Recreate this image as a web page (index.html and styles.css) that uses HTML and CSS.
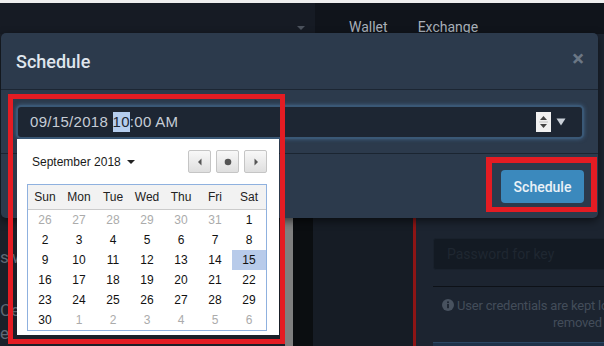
FILE: index.html
```html
<!DOCTYPE html>
<html lang="en">
<head>
<meta charset="utf-8">
<title>Schedule</title>
<link rel="stylesheet" href="styles.css">
</head>
<body>
<div class="topstrip"></div>
<header class="nav">
  <div class="nav-left"><span class="nav-caret"></span></div>
  <nav class="nav-right">
    <a class="nav-link">Wallet</a>
    <a class="nav-link">Exchange</a>
  </nav>
</header>
<main class="main">
  <section class="col-left">
    <p class="frag frag-1">s,w</p>
    <p class="frag frag-2">Cer</p>
    <p class="frag frag-3">e</p>
  </section>
  <div class="col-gray"></div>
  <div class="col-black"></div>
  <div class="col-mid"></div>
  <div class="col-redline"></div>
  <section class="col-right">
    <div class="pw-input">Password for key</div>
    <div class="divider"></div>
    <p class="info">
      <span class="info-l1"><svg class="info-icon" viewBox="0 0 12 12" width="12" height="12"><circle cx="6" cy="6" r="6" fill="#48525f"/><rect x="5.1" y="5" width="1.8" height="4.2" fill="#1c2430"/><circle cx="6" cy="3.3" r="1" fill="#1c2430"/></svg> User credentials are kept locally</span>
      <span class="info-l2">removed</span>
    </p>
    <div class="bluebar"></div>
  </section>
</main>

<div class="modal">
  <div class="modal-header">
    <h2 class="modal-title">Schedule</h2>
    <span class="modal-close">×</span>
  </div>
  <div class="modal-body">
    <div class="dt-input">
      <span class="dt-text">09/15/2018 <span class="dt-sel">10</span>:00 AM</span>
      <span class="dt-spin">
        <svg viewBox="0 0 15 20" width="15" height="20"><path d="M4 8 L7.5 4 L11 8 Z" fill="#444"/><path d="M4 12 L7.5 16 L11 12 Z" fill="#444"/><rect x="3" y="9.6" width="9" height="0.8" fill="#bbb"/></svg>
      </span>
      <span class="dt-drop">
        <svg viewBox="0 0 10 8" width="10" height="8"><path d="M0.5 0.5 L9.5 0.5 L5 7.5 Z" fill="#c9d0d8"/></svg>
      </span>
      <div class="cal">
        <div class="cal-top">
          <span class="cal-month">September 2018 <svg class="cal-caret" viewBox="0 0 8 4" width="8" height="4"><path d="M0 0 L8 0 L4 4 Z" fill="#222"/></svg></span>
          <div class="cal-navs">
            <span class="cal-btn"><svg viewBox="0 0 6 8" width="6" height="8"><path d="M4.5 0.5 L4.5 7.5 L1 4 Z" fill="#555"/></svg></span>
            <span class="cal-btn"><svg viewBox="0 0 8 8" width="8" height="8"><circle cx="4" cy="4" r="3.3" fill="#555"/></svg></span>
            <span class="cal-btn"><svg viewBox="0 0 6 8" width="6" height="8"><path d="M1.5 0.5 L1.5 7.5 L5 4 Z" fill="#555"/></svg></span>
          </div>
        </div>
        <div class="cal-grid">
          <div class="cal-head">
            <span>Sun</span><span>Mon</span><span>Tue</span><span>Wed</span><span>Thu</span><span>Fri</span><span>Sat</span>
          </div>
          <div class="cal-days">
            <span class="off">26</span><span class="off">27</span><span class="off">28</span><span class="off">29</span><span class="off">30</span><span class="off">31</span><span>1</span>
            <span>2</span><span>3</span><span>4</span><span>5</span><span>6</span><span>7</span><span>8</span>
            <span>9</span><span>10</span><span>11</span><span>12</span><span>13</span><span>14</span><span class="sel">15</span>
            <span>16</span><span>17</span><span>18</span><span>19</span><span>20</span><span>21</span><span>22</span>
            <span>23</span><span>24</span><span>25</span><span>26</span><span>27</span><span>28</span><span>29</span>
            <span>30</span><span class="off">1</span><span class="off">2</span><span class="off">3</span><span class="off">4</span><span class="off">5</span><span class="off">6</span>
          </div>
        </div>
      </div>
    </div>
  </div>
  <div class="modal-footer">
    <button class="btn-primary">Schedule</button>
  </div>
</div>

<div class="mark mark-picker"></div>
<div class="mark mark-button"></div>
</body>
</html>
```

FILE: styles.css
```css
* { box-sizing: border-box; }
html, body { margin: 0; padding: 0; }
body {
  width: 604px;
  height: 346px;
  overflow: hidden;
  background: #11151c;
  font-family: Roboto, "Liberation Sans", sans-serif;
  position: relative;
}
p, h2 { margin: 0; }

.topstrip { height: 3px; background: #eeeeee; }

.nav { height: 31px; display: flex; }
.nav-left {
  width: 315px;
  background: #161b24;
  display: flex;
  justify-content: flex-end;
  align-items: flex-start;
  padding: 23px 10px 0 0;
}
.nav-caret {
  width: 0; height: 0;
  border-left: 4px solid transparent;
  border-right: 4px solid transparent;
  border-top: 4px solid #4b525c;
}
.nav-right {
  flex: 1;
  background: #10141b;
  display: flex;
  gap: 30px;
  padding: 15px 0 0 34px;
}
.nav-link { font-size: 14px; line-height: 18px; color: #a9b0b9; }

.main { display: flex; height: 312px; }
.col-left {
  width: 285px;
  background: #1a2029;
  padding-top: 212px;
  overflow: hidden;
}
.frag { font-size: 17px; color: #5f6874; line-height: 22px; }
.frag-2 { margin-top: 31px; }
.frag-3 { margin-top: 1px; }
.col-gray { width: 8px; background: #7f7f7f; }
.col-black { width: 20px; background: #0b0e11; }
.col-mid { width: 100px; background: #161c25; }
.col-redline { width: 3px; background: #8d1515; }
.col-right {
  flex: 1;
  background: #1c2430;
  padding: 204px 0 0 17px;
  overflow: hidden;
}
.pw-input {
  width: 300px;
  height: 32px;
  background: #131a23;
  border: 1px solid #19212c;
  border-radius: 3px;
  padding-left: 13px;
  font-size: 14px;
  line-height: 30px;
  color: #1f2731;
}
.divider { width: 300px; height: 1px; background: #0d1117; margin-top: 16px; }
.info {
  margin-top: 10px;
  font-size: 13px;
  line-height: 17px;
  letter-spacing: -0.2px;
  color: #434d5a;
  white-space: nowrap;
}
.info-l1 { display: block; padding-left: 9px; }
.info-l2 { display: block; padding-left: 120px; }
.info-icon { vertical-align: -1px; }
.bluebar {
  width: 300px;
  height: 10px;
  margin-top: 11px;
  background: #1e3249;
  border-top: 1px solid #2b4663;
}

/* modal */
.modal {
  position: absolute;
  left: 1px;
  top: 33px;
  width: 597px;
  height: 185px;
  background: #2c3a4c;
  border-radius: 5px;
  box-shadow: 0 3px 8px rgba(0,0,0,0.55);
  display: flex;
  flex-direction: column;
}
.modal-header {
  height: 57px;
  border-bottom: 1px solid #1c2633;
  display: flex;
  align-items: center;
  justify-content: space-between;
  padding: 0 14px 0 15px;
}
.modal-title { font-size: 18px; font-weight: 500; color: #dfe5ec; }
.modal-close { font-size: 22px; font-weight: 700; color: #6b7785; line-height: 1; margin-top: -4px; }
.modal-body {
  height: 64px;
  padding: 15px 14px 0 15px;
  border-bottom: 1px solid #1b2531;
}
.dt-input {
  position: relative;
  height: 34px;
  border: 2px solid #3a5876;
  box-shadow: 0 0 4px rgba(84,134,184,0.55);
  background: #1d2633;
  border-radius: 5px;
  display: flex;
  align-items: center;
  padding: 0 16px 0 12px;
}
.dt-text {
  font-family: "Liberation Sans", Arial, sans-serif;
  font-size: 15px;
  letter-spacing: 0.3px;
  color: #c6cdd6;
}
.dt-sel { background: #b5cdee; color: #1d2633; display: inline-block; line-height: 20px; }
.dt-spin { margin-left: auto; display: flex; background: #f1f1f1; }
.dt-spin svg, .dt-drop svg { display: block; }
.dt-drop { margin-left: 5px; }

.cal {
  position: absolute;
  left: -1px;
  top: 100%;
  margin-top: 2px;
  width: 262px;
  height: 196px;
  background: #ffffff;
  padding: 11px 12px 0 10px;
  font-family: "Liberation Sans", Arial, sans-serif;
  font-size: 12px;
  color: #111;
  z-index: 2;
}
.cal-top { display: flex; align-items: center; justify-content: space-between; height: 23px; padding-left: 5px; }
.cal-month { color: #1a1a1a; display: flex; align-items: center; gap: 6px; }
.cal-navs { display: flex; gap: 5px; }
.cal-btn {
  width: 23px;
  height: 23px;
  border: 1px solid #c5c5c5;
  border-radius: 2px;
  background: linear-gradient(#f8f8f8, #dfdfdf);
  display: flex;
  align-items: center;
  justify-content: center;
}
.cal-grid { margin-top: 11px; width: 240px; border: 1px solid #8fb1df; }
.cal-head {
  display: grid;
  grid-template-columns: repeat(7, 34px);
  height: 25px;
  background: #f2f2f2;
  border-bottom: 1px solid #cbcbcb;
  align-items: center;
  text-align: center;
  color: #222;
}
.cal-days {
  display: grid;
  grid-template-columns: repeat(7, 34px);
  grid-auto-rows: 20px;
  text-align: center;
  line-height: 20px;
}
.cal-days .off { color: #ababab; }
.cal-days .sel { background: #b8cbea; }

.modal-footer { flex: 1; display: flex; justify-content: flex-end; align-items: flex-start; padding: 16px 14px 0 0; }
.btn-primary {
  width: 83px;
  height: 33px;
  border: none;
  border-radius: 4px;
  background: #3b89bd;
  color: #eaf1f7;
  font-family: Roboto, "Liberation Sans", sans-serif;
  font-size: 14px;
  font-weight: 500;
}

/* annotation marks */
.mark { position: absolute; border: 5px solid #e41c23; z-index: 5; }
.mark-picker { left: 8px; top: 94px; width: 277px; height: 250px; }
.mark-button { left: 486px; top: 157px; width: 111px; height: 55px; border-width: 6px 6px 5px 6px; }
```
